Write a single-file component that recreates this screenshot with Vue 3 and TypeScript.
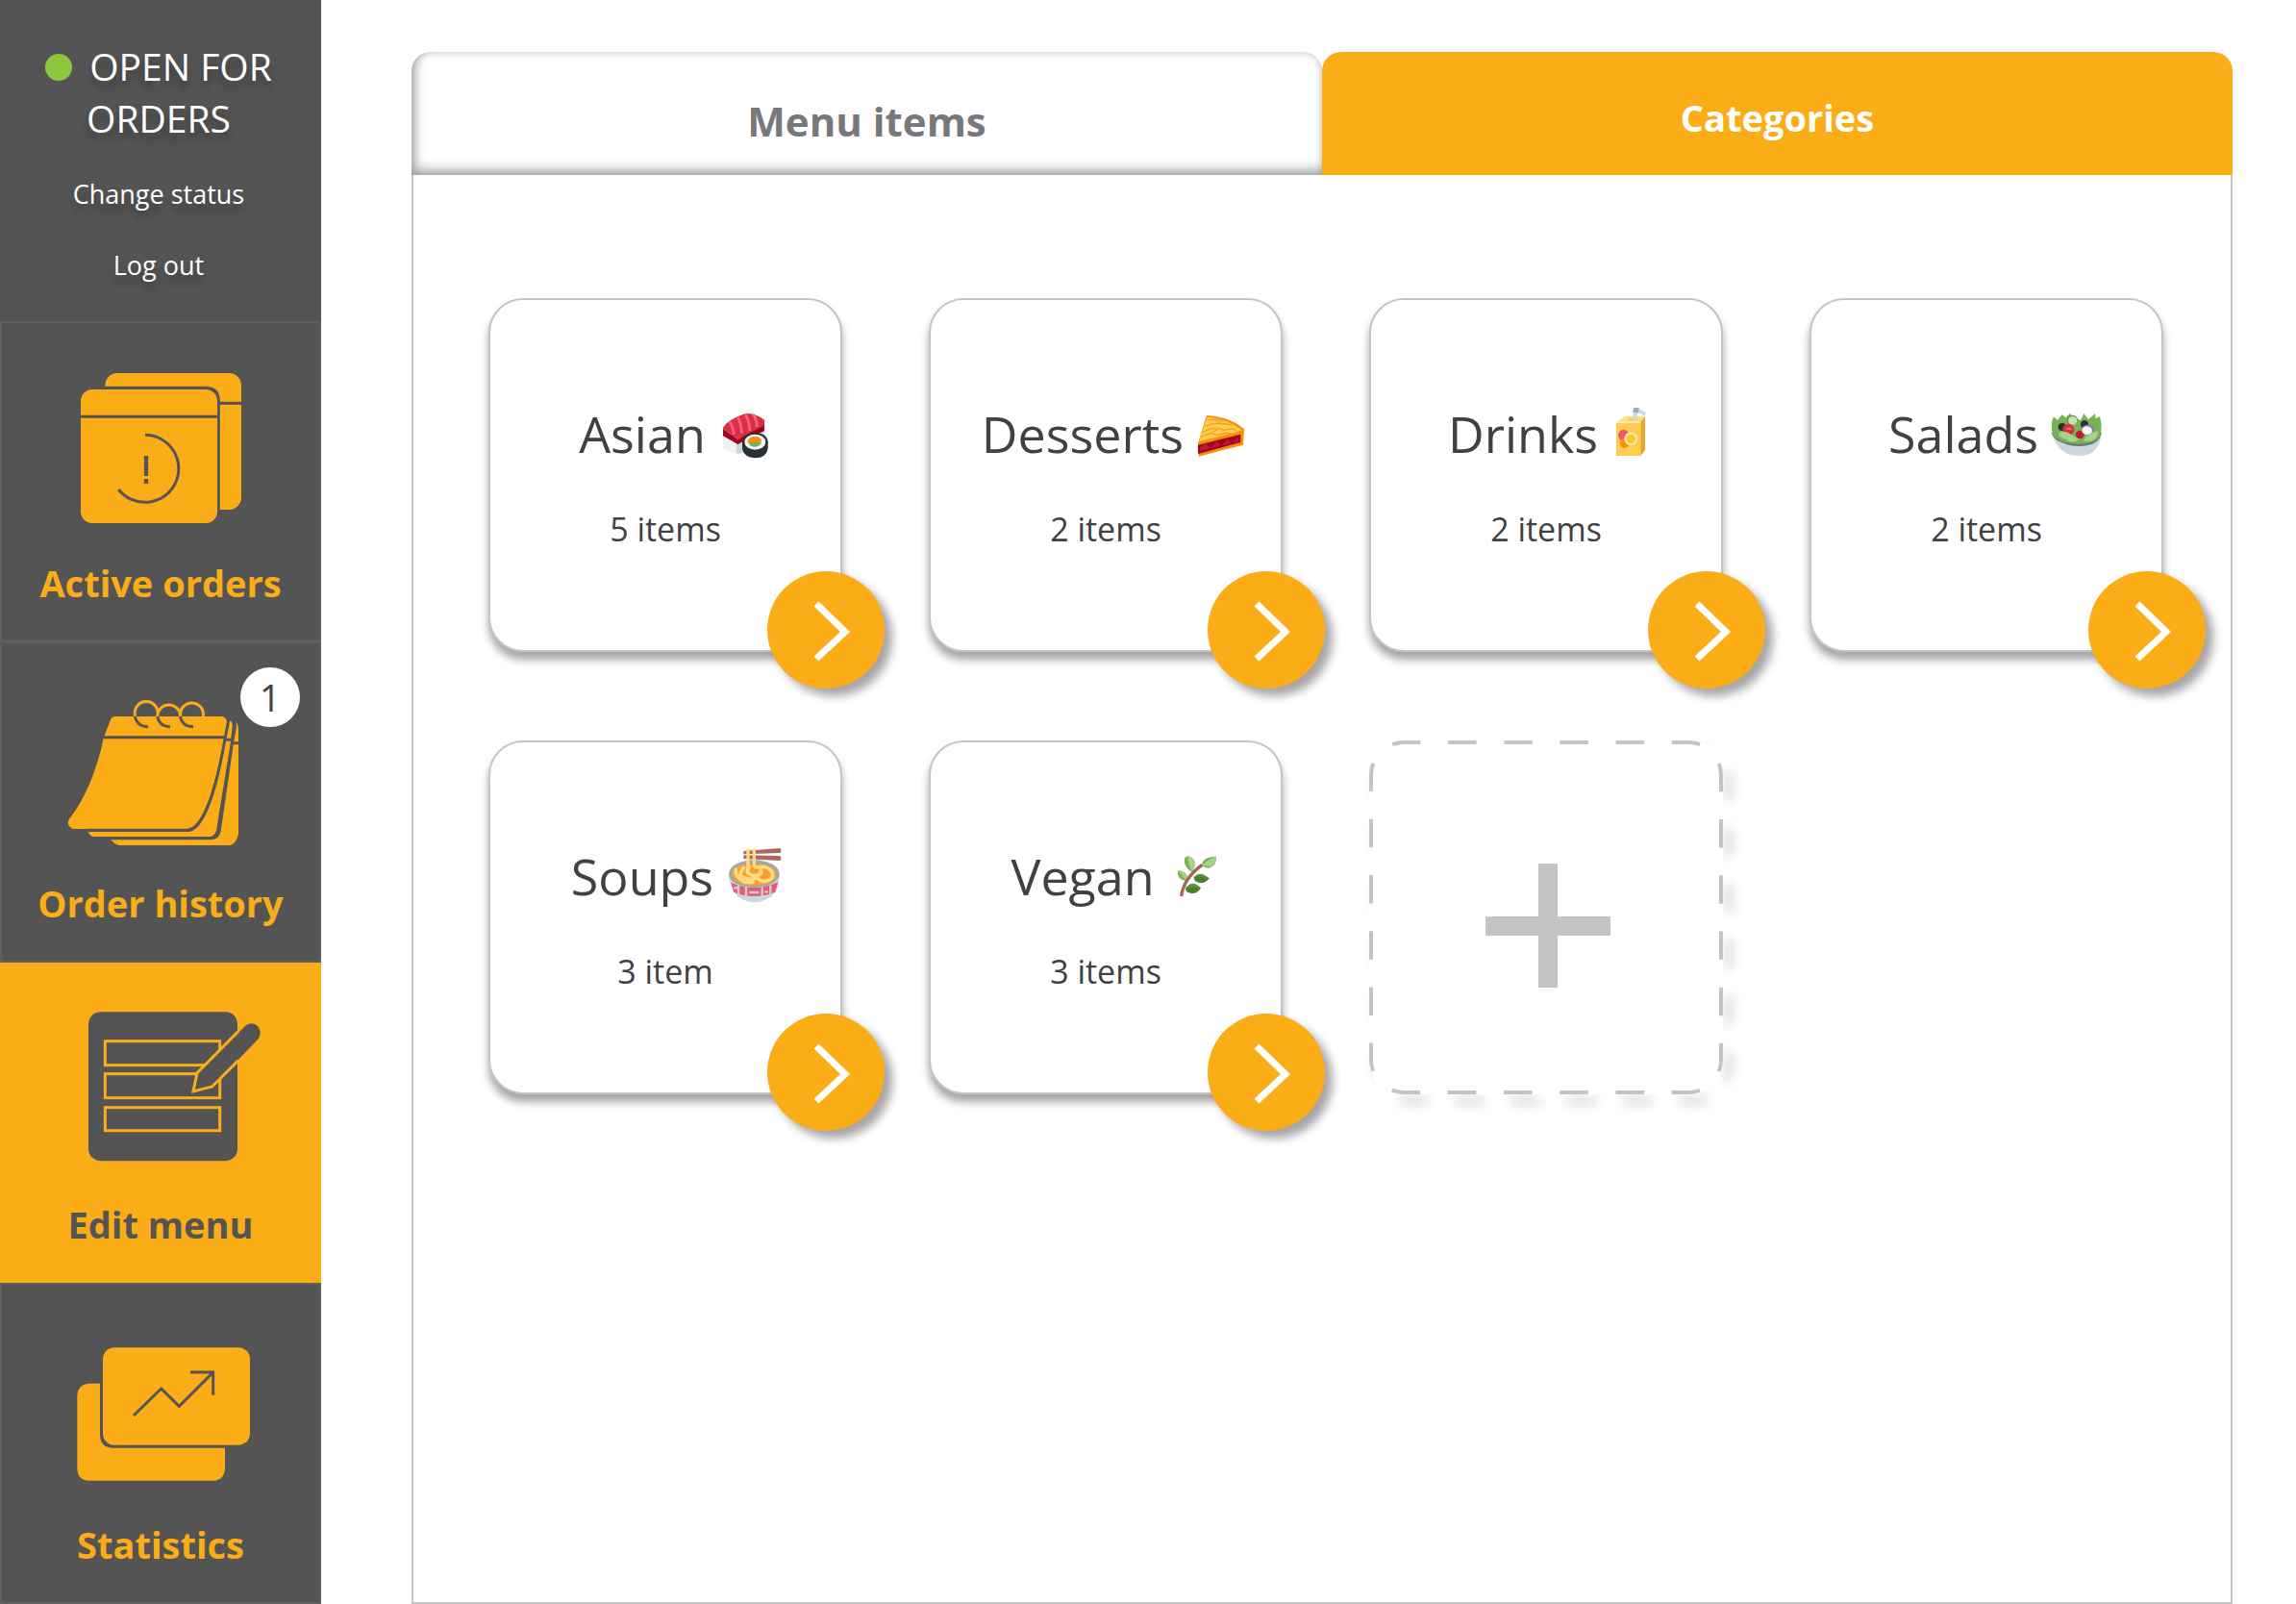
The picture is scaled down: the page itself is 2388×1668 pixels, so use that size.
<script setup lang="ts">
import { ref } from 'vue'

interface Category {
  id: string
  name: string
  count: string
}

const categories: Category[] = [
  { id: 'asian', name: 'Asian', count: '5 items' },
  { id: 'desserts', name: 'Desserts', count: '2 items' },
  { id: 'drinks', name: 'Drinks', count: '2 items' },
  { id: 'salads', name: 'Salads', count: '2 items' },
  { id: 'soups', name: 'Soups', count: '3 item' },
  { id: 'vegan', name: 'Vegan', count: '3 items' },
]

const tab = ref<'items' | 'categories'>('categories')
</script>

<template>
  <div class="page">
    <aside class="sidebar">
      <section class="status">
        <p class="state"><span class="dot"></span>OPEN FOR<br />ORDERS</p>
        <button type="button" class="plain">Change status</button>
        <button type="button" class="plain">Log out</button>
      </section>

      <nav class="nav">
        <a href="#active" class="tile">
          <svg class="icon" viewBox="141 132 720 540" aria-hidden="true">
            <rect x="328" y="174" width="425" height="426" rx="38" fill="#fbad18" />
            <path d="M686 268H754" stroke="#545454" stroke-width="9" />
            <path d="M320 220H644Q682 222 682 260V620H320Z" fill="#545454" />
            <path d="M320 220H644Q682 222 682 260V610" fill="none" stroke="#545454" stroke-width="9" />
            <rect x="252" y="225" width="426" height="417" rx="36" fill="#fbad18" />
            <path d="M250 310H680" stroke="#545454" stroke-width="9" />
            <path d="M453 367A105 105 0 1 1 370 537" fill="none" stroke="#545454" stroke-width="9" />
            <path d="M456 432V495M456 504V519" stroke="#545454" stroke-width="13" />
          </svg>
          <span class="label">Active orders</span>
        </a>

        <a href="#history" class="tile">
          <svg class="icon" viewBox="141 141 720 540" aria-hidden="true">
            <path d="M735 270Q744 280 744 300V618Q742 645 720 657H370Q355 652 345 639H660Q680 636 685 612L724 342Z" fill="#fbad18" />
            <path d="M717 268Q726 272 725 285L719 340L675 610Q672 625 658 630H288Q278 624 275 615H590Q620 608 643 555Q670 500 694 350L708 290Z" fill="#fbad18" />
            <path d="M733 272V290L724 340L685 610Q680 636 658 635H340" fill="none" stroke="#545454" stroke-width="9" />
            <path d="M360 255H692Q708 258 708 275Q700 330 682 410Q660 500 637 550Q612 602 585 606H228Q205 595 216 575Q290 480 324 320L344 268Q348 255 360 255Z" fill="#fbad18" />
            <path d="M713 268L704 315Q684 430 662 500Q642 560 622 586Q605 610 586 610H270" fill="none" stroke="#545454" stroke-width="9" />
            <path d="M322 320H700M704 328H720M722 338H746" fill="none" stroke="#545454" stroke-width="9" />
            <g fill="none" stroke-width="9">
              <path d="M422 255A36 36 0 1 1 491 255M491 255A36 36 0 1 1 563 255M563 255A36 36 0 1 1 634 255" stroke="#fbad18" />
              <path d="M421 255Q428 287 462 287M491 255Q498 287 531 287M562 255Q569 287 603 287" stroke="#545454" />
            </g>
          </svg>
          <span class="label">Order history</span>
          <span class="badge">1</span>
        </a>

        <a href="#menu" class="tile current" aria-current="page">
          <svg class="icon" viewBox="141 152 720 540" aria-hidden="true">
            <rect x="276" y="186" width="465" height="465" rx="38" fill="#545454" />
            <g fill="none" stroke="#fbad18" stroke-width="9">
              <rect x="328" y="277" width="358" height="75" />
              <rect x="328" y="379" width="358" height="75" />
              <rect x="328" y="484" width="358" height="72" />
            </g>
            <path d="M603 434L615 376L768 227Q790 215 806 232Q818 252 806 270L662 419Z" fill="#545454" />
            <path d="M744 246L615 376L603 434L662 419L744 337" fill="none" stroke="#fbad18" stroke-width="9" />
          </svg>
          <span class="label">Edit menu</span>
        </a>

        <a href="#statistics" class="tile">
          <svg class="icon" viewBox="141 133 720 540" aria-hidden="true">
            <path d="M276 327H312V490Q314 526 350 528H702V594Q700 624 672 630H276Q243 628 241 594V363Q243 330 276 327Z" fill="#fbad18" />
            <rect x="321" y="215" width="459" height="304" rx="36" fill="#fbad18" />
            <path d="M417 427L503 343L559 398L664 293M594 292H665V363" fill="none" stroke="#545454" stroke-width="9" />
          </svg>
          <span class="label">Statistics</span>
        </a>
      </nav>
    </aside>

    <main class="content">
      <div class="tabs" role="tablist">
        <button type="button" role="tab" class="tab" :class="{ selected: tab === 'items' }" :aria-selected="tab === 'items'" @click="tab = 'items'">Menu items</button>
        <button type="button" role="tab" class="tab" :class="{ selected: tab === 'categories' }" :aria-selected="tab === 'categories'" @click="tab = 'categories'">Categories</button>
      </div>

      <div class="panel" role="tabpanel">
        <article v-for="c in categories" :key="c.id" class="card">
          <h2 class="name">
            {{ c.name }}
            <svg v-if="c.id === 'asian'" class="food" viewBox="768 408 168 168" aria-hidden="true">
              <path d="M786 488L832 512L915 470V500L840 544Q800 544 787 528Z" fill="#f0f1f3" />
              <path d="M828 512L915 468V500L842 545H828Z" fill="#ccd6dd" />
              <path d="M786 468L832 500L915 448V474L832 516L786 490Z" fill="#a0041e" />
              <path d="M786 464Q800 440 850 422Q880 414 915 440V457L832 500L786 468Z" fill="#dd2e44" />
              <path d="M807 446Q818 462 820 486M832 432Q842 448 845 482M856 424Q868 445 870 474M880 422Q892 440 892 462" fill="none" stroke="#f4657e" stroke-width="8" />
              <path d="M846 508H926V530Q920 559 886 559Q852 557 846 530Z" fill="#292f33" />
              <ellipse cx="886" cy="508" rx="40" ry="29" fill="#292f33" />
              <ellipse cx="886" cy="509" rx="33" ry="24" fill="#f0f4f6" />
              <path d="M863 512Q861 491 887 491Q907 494 906 508L880 514Z" fill="#f4900c" />
              <path d="M866 515Q885 505 906 510Q900 524 885 524Q872 523 866 515Z" fill="#77b255" />
            </svg>
            <svg v-else-if="c.id === 'desserts'" class="food" viewBox="759 78 168 168" aria-hidden="true">
              <path d="M768 182L795 96Q860 98 912 138L909 188L770 224Z" fill="#f4900c" />
              <path d="M768 188L901 155V180L768 216Z" fill="#a0041e" />
              <path d="M772 198L792 182L808 200L826 177L842 192L860 170L874 184L894 162V178L832 192L774 208Z" fill="#be1931" />
              <path d="M770 178L797 101Q850 104 904 140L890 148Z" fill="#ffcc4d" />
              <path d="M797 112Q825 104 848 114M790 130Q820 115 874 126M783 148Q822 128 850 142Q870 135 886 142M778 164Q810 145 828 158Q850 150 868 152M815 108L838 120M830 140L810 150" fill="none" stroke="#f4a01c" stroke-width="4" />
            </svg>
            <svg v-else-if="c.id === 'drinks'" class="food" viewBox="0 0 168 168" aria-hidden="true">
              <path d="M78 30L84 0L112 14" fill="none" stroke="#ccd6dd" stroke-width="12" />
              <path d="M72 8L76 -6H92L90 10Z" fill="#9aaab4" />
              <path d="M21 38L48 20H111L96 42Z" fill="#ffe08a" />
              <path d="M62 26H92L86 34H54Z" fill="#ffcc4d" />
              <path d="M78 32L81 10" stroke="#ccd6dd" stroke-width="11" />
              <path d="M21 38H97V144H21Z" fill="#ffcc4d" />
              <path d="M21 36H97V42H21Z" fill="#ffe8b6" />
              <path d="M97 38L111 22V126L97 144Z" fill="#e0aa22" />
              <ellipse cx="44" cy="80" rx="17" ry="18" fill="#ea596e" />
              <ellipse cx="47" cy="105" rx="14" ry="15" fill="#f4900c" />
              <circle cx="67" cy="91" r="21" fill="#ffe8a6" />
              <circle cx="67" cy="91" r="14" fill="#ffc338" />
            </svg>
            <svg v-else-if="c.id === 'salads'" class="food" viewBox="0 0 168 168" aria-hidden="true">
              <path d="M8 76H160Q160 105 138 130Q112 150 68 142Q20 128 8 76Z" fill="#ccd6dd" />
              <path d="M5 72H162Q155 105 115 112Q70 118 36 102Q12 95 5 72Z" fill="#66757f" />
              <path d="M8 76Q2 40 12 22L24 32L38 16L50 25L62 12L76 24L96 34L106 12L120 30L142 12V28L156 22Q164 46 158 80Q142 108 82 107Q25 104 8 76Z" fill="#77b255" />
              <ellipse cx="70" cy="32" rx="17" ry="15" fill="#5c913b" />
              <ellipse cx="71" cy="34" rx="14" ry="13" fill="#c6e5b3" />
              <circle cx="38" cy="54" r="12" fill="#292f33" />
              <circle cx="108" cy="46" r="12" fill="#292f33" />
              <circle cx="58" cy="62" r="18" fill="#dd2e44" />
              <path d="M48 62Q60 48 70 64" fill="#ea6e75" />
              <circle cx="94" cy="78" r="13" fill="#be1931" />
              <ellipse cx="118" cy="62" rx="19" ry="15" fill="#9266cc" />
              <ellipse cx="116" cy="65" rx="16" ry="13" fill="#f5f8fa" />
              <path d="M28 82Q26 64 52 70L92 92Q80 104 62 100Z" fill="#a6d388" />
              <path d="M105 98Q112 76 150 66Q152 92 128 98Z" fill="#a6d388" />
            </svg>
            <svg v-else-if="c.id === 'soups'" class="food" viewBox="0 0 168 168" aria-hidden="true">
              <path d="M12 72H171Q168 112 142 140Q92 174 42 140Q14 112 12 72Z" fill="#ccd6dd" />
              <path d="M19 95Q90 128 166 94L157 126Q90 150 28 126Z" fill="#ea596e" />
              <path d="M42 104V140M66 108V142M116 108V142M142 104V140M28 112H38M76 126H106M124 124H134" stroke="#ccd6dd" stroke-width="7" />
              <ellipse cx="91" cy="68" rx="79" ry="43" fill="#9aaab4" />
              <ellipse cx="91" cy="70" rx="70" ry="35" fill="#f4a22b" />
              <path d="M58 -3L172 -12Q178 -4 172 3L58 7ZM58 10L172 12Q178 20 172 27L58 21Z" fill="#aa6a58" />
              <path d="M72 -10V48M91 -10V48" stroke="#ffd983" stroke-width="10" />
              <path d="M34 54Q30 78 62 94H88M58 50Q38 75 60 80Q80 90 100 80M76 46Q60 66 84 72Q120 76 112 56M96 48Q130 40 145 60Q160 85 120 92Q92 84 108 66" fill="none" stroke="#ffd983" stroke-width="11" stroke-linecap="round" />
            </svg>
            <svg v-else class="food" viewBox="0 0 168 168" aria-hidden="true">
              <g fill="#77b255">
                <path d="M82 64Q50 45 58 18L68 12Q92 20 90 42Z" />
                <path d="M112 42Q110 16 156 14Q158 44 132 50Q120 50 112 42Z" />
                <path d="M62 90Q32 86 36 58Q60 58 66 78Z" />
              </g>
              <path d="M82 64Q66 38 68 12Q92 20 90 42ZM112 42Q130 22 156 14Q154 34 144 46ZM62 90Q48 70 36 58Q60 58 66 78Z" fill="#a6d388" />
              <path d="M86 78Q106 56 134 82Q116 106 90 90ZM60 112Q82 84 108 112Q92 138 64 124Z" fill="#5c913b" />
              <path d="M86 80Q104 74 134 82Q116 106 90 90ZM60 114Q82 110 108 112Q92 138 64 124Z" fill="#4b8030" />
              <path d="M47 138Q54 82 112 40" fill="none" stroke="#a0645a" stroke-width="10" />
            </svg>
          </h2>
          <p class="count">{{ c.count }}</p>
          <button type="button" class="open" :aria-label="`Open ${c.name}`">
            <svg class="chevron" viewBox="0 0 122 122" aria-hidden="true">
              <path d="M51 34L81 63L51 91" fill="none" stroke="#fff" stroke-width="7" />
            </svg>
          </button>
        </article>

        <button type="button" class="add" aria-label="Add category">
          <svg class="outline" viewBox="0 0 368 368" aria-hidden="true">
            <defs>
              <path id="dashed-edge" d="M184 2H332A34 34 0 0 1 366 36V332A34 34 0 0 1 332 366H36A34 34 0 0 1 2 332V36A34 34 0 0 1 36 2Z" stroke-dasharray="29.5 28.73" stroke-dashoffset="-14.4" />
            </defs>
            <use href="#dashed-edge" class="shade" x="8" y="9" fill="none" stroke="#8c8c8c" stroke-opacity="0.35" stroke-width="8" />
            <rect width="368" height="368" rx="34" fill="#fff" />
            <use href="#dashed-edge" fill="none" stroke="#c4c4c4" stroke-width="4" />
            <path d="M121 193H251M186 128V257" stroke="#c4c4c4" stroke-width="20" />
          </svg>
        </button>
      </div>
    </main>
  </div>
</template>

<style>
body {
  margin: 0;
  background: #fff;
}
</style>

<style scoped>
.page {
  display: flex;
  min-height: 100vh;
  font-family: "Open Sans", "Noto Sans", sans-serif;
  color: #414042;
}

button {
  font: inherit;
  color: inherit;
  border: 0;
  padding: 0;
  background: none;
  cursor: pointer;
}

.sidebar {
  flex: 0 0 334px;
  display: grid;
  grid-template-rows: 1fr 4fr;
  background: #545454;
}

.status {
  display: flex;
  flex-direction: column;
  align-items: center;
  box-sizing: border-box;
  padding: 42px 4px 0 0;
  color: #fff;
  text-shadow: 0 8px 8px rgba(0, 0, 0, 0.3);
}

.state {
  margin: 0 0 32px;
  font-size: 39px;
  line-height: 54px;
  text-align: center;
}

.dot {
  display: inline-block;
  width: 28px;
  height: 28px;
  margin-right: 18px;
  border-radius: 50%;
  background: #8dc63f;
}

.plain {
  margin-bottom: 34px;
  font-size: 27px;
  line-height: 40px;
  text-shadow: inherit;
}

.plain:last-child {
  margin-bottom: 0;
}

.nav {
  display: grid;
  grid-auto-rows: 1fr;
}

.tile {
  position: relative;
  display: flex;
  flex-direction: column;
  align-items: center;
  box-sizing: border-box;
  padding-top: 38px;
  border: 2px solid #5f5f5f;
  color: #fbad18;
  text-decoration: none;
}

.current {
  border-color: #fbad18;
  background: #fbad18;
  color: #545454;
}

.icon {
  width: 240px;
  height: 180px;
}

.label {
  margin-top: 26px;
  font-size: 38px;
  line-height: 52px;
  font-weight: 700;
}

.badge {
  position: absolute;
  top: 25px;
  right: 20px;
  width: 62px;
  border-radius: 50%;
  background: #fff;
  color: #414042;
  font-size: 39px;
  line-height: 62px;
  text-align: center;
}

.content {
  flex: 1;
  display: flex;
  flex-direction: column;
  padding: 54px 66px 0 94px;
}

.tabs {
  display: flex;
}

.tab {
  flex: 1;
  height: 128px;
  padding-top: 16px;
  border-radius: 20px 20px 0 0;
  background: #fff;
  box-shadow: inset 4px -6px 12px rgba(35, 31, 32, 0.35), inset 0 0 8px rgba(35, 31, 32, 0.2);
  color: #77787b;
  font-size: 42px;
  line-height: 56px;
  font-weight: 700;
}

.tab.selected {
  padding-top: 8px;
  background: #fbad18;
  box-shadow: none;
  color: #fff;
  font-size: 38px;
}

.panel {
  flex: 1;
  display: grid;
  grid-template-columns: repeat(auto-fill, 368px);
  grid-auto-rows: 368px;
  gap: 92px 90px;
  padding: 128px 60px 60px 78px;
  border: 2px solid #c4c4c4;
  border-top: 0;
}

.card {
  position: relative;
  box-sizing: border-box;
  padding-top: 103px;
  border: 2px solid #c4c4c4;
  border-radius: 36px;
  background: #fff;
  box-shadow: 0 8px 8px rgba(35, 31, 32, 0.4);
  text-align: center;
}

.name {
  display: flex;
  justify-content: center;
  gap: 12px;
  margin: 0 0 40px;
  padding-left: 20px;
  font-size: 52px;
  line-height: 72px;
  font-weight: 400;
}

.food {
  width: 56px;
  height: 56px;
  margin-top: 11px;
  overflow: visible;
}

.count {
  margin: 0;
  font-size: 34px;
  line-height: 46px;
}

.open {
  position: absolute;
  right: -46px;
  bottom: -40px;
  width: 122px;
  height: 122px;
  border-radius: 50%;
  background: #fbad18;
  box-shadow: 8px 8px 10px rgba(35, 31, 32, 0.4);
}

.chevron,
.outline {
  display: block;
  width: 100%;
  height: 100%;
  overflow: visible;
}

.shade {
  filter: blur(6px);
}
</style>
